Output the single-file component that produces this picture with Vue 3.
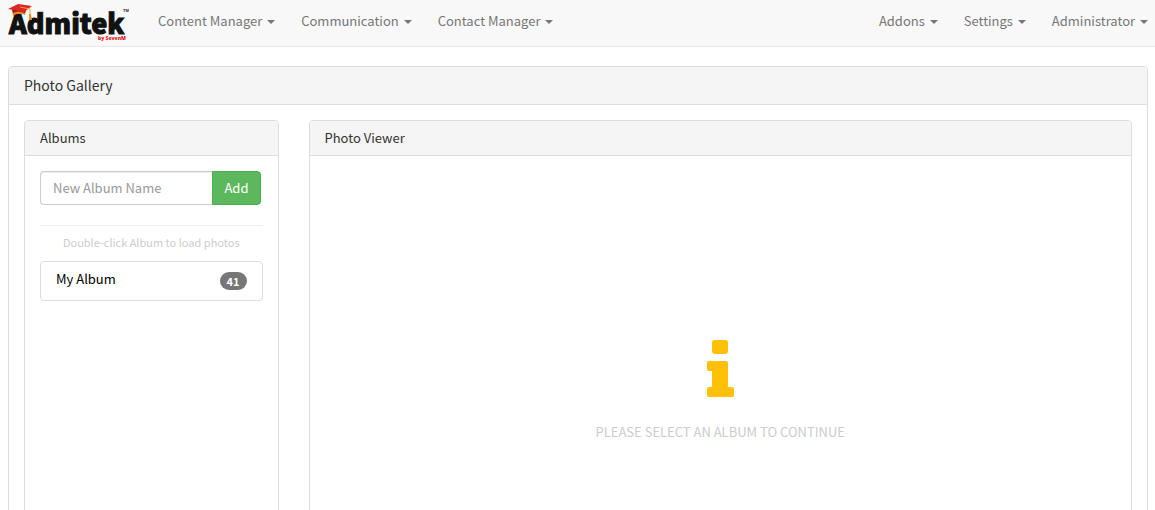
<template>
  <div class="page">
    <nav class="navbar">
      <a href="#" class="brand" aria-label="Admitek">
        <svg width="132" height="46" viewBox="0 0 132 46">
          <text x="9" y="34" class="logo-name">Admitek</text>
          <text x="98" y="40" class="logo-by">by SevenM</text>
          <text x="123" y="12" class="logo-tm">TM</text>
          <path d="M12 10 L13 16 Q18 12 25 15 L26 10 Z" fill="#e8862e" />
          <path d="M12 9 L13 13 Q18 10 25 13 L26 9 Z" fill="#9c1c12" />
          <path d="M8 9 L18 4 L32 6 L24 12 Z" fill="#dc2820" />
          <path d="M20 7 L30 9 L30 15" fill="none" stroke="#f5a03a" stroke-width="1" />
          <path d="M29 14 L31 14 L32 20 L29 20 Z" fill="#f0922c" />
        </svg>
      </a>
      <ul class="nav">
        <li v-for="item in leftMenu" :key="item">
          <a href="#">{{ item }} <b class="caret"></b></a>
        </li>
      </ul>
      <ul class="nav nav-right">
        <li v-for="item in rightMenu" :key="item">
          <a href="#">{{ item }} <b class="caret"></b></a>
        </li>
      </ul>
    </nav>

    <main class="panel gallery">
      <h1 class="panel-heading gallery-heading">Photo Gallery</h1>
      <div class="gallery-body">
        <section class="panel albums">
          <h2 class="panel-heading">Albums</h2>
          <div class="albums-body">
            <form class="input-group" @submit.prevent="addAlbum">
              <input type="text" v-model="albumName" placeholder="New Album Name" aria-label="New Album Name" />
              <button type="submit">Add</button>
            </form>
            <hr />
            <p class="hint">Double-click Album to load photos</p>
            <ul class="list">
              <li v-for="album in albums" :key="album.name">
                <span>{{ album.name }}</span>
                <span class="badge">{{ album.count }}</span>
              </li>
            </ul>
          </div>
        </section>

        <section class="panel viewer">
          <h2 class="panel-heading">Photo Viewer</h2>
          <div class="viewer-body">
            <svg class="info" width="28" height="58" viewBox="-1 0 28 58">
              <rect x="5" y="0" width="16" height="14" rx="3" />
              <path d="M2 21 H19 Q21 21 21 23 V47 H24 Q27 47 27 49 V55 Q27 57 24 57 H2 Q0 57 0 55 V49 Q0 47 2 47 H5 V31 H2 Q0 31 0 29 V23 Q0 21 2 21 Z" />
            </svg>
            <p>PLEASE SELECT AN ALBUM TO CONTINUE</p>
          </div>
        </section>
      </div>
    </main>
  </div>
</template>

<script setup>
import { ref } from 'vue';

const leftMenu = ['Content Manager', 'Communication', 'Contact Manager'];
const rightMenu = ['Addons', 'Settings', 'Administrator'];

const albumName = ref('');
const albums = ref([{ name: 'My Album', count: 41 }]);

const addAlbum = () => {
  const name = albumName.value.trim();
  if (name) {
    albums.value.push({ name, count: 0 });
    albumName.value = '';
  }
};
</script>

<style>
body {
  margin: 0;
  background: #fff;
}
</style>

<style scoped>
.page {
  height: 100vh;
  overflow: hidden;
  font-family: "Source Sans Pro", "Noto Sans CJK SC", sans-serif;
  font-size: 13px;
  line-height: 20px;
  color: #333;
}

.page * {
  box-sizing: border-box;
}

/* top bar */
.navbar {
  display: flex;
  height: 47px;
  padding-right: 7px;
  background: #f8f8f8;
  border-bottom: 1px solid #e7e7e7;
}

.brand {
  margin-right: 26px;
}

.brand svg {
  display: block;
}

.logo-name {
  font-family: "Noto Sans CJK SC", sans-serif;
  font-size: 27px;
  font-weight: 900;
  fill: #111;
  stroke: #111;
  stroke-width: 1px;
}

.logo-by {
  font-family: "Open Sans", sans-serif;
  font-size: 5px;
  font-weight: 800;
  fill: #e02020;
}

.logo-tm {
  font-family: "Liberation Sans", sans-serif;
  font-size: 4px;
  font-weight: 700;
  fill: #222;
}

.nav {
  display: flex;
  gap: 26px;
  margin: 0;
  padding: 11px 0 0;
  list-style: none;
}

.nav-right {
  margin-left: auto;
}

.nav a {
  color: #777;
  text-decoration: none;
}

.caret {
  display: inline-block;
  margin-left: 2px;
  vertical-align: middle;
  border-top: 4px solid;
  border-right: 4px solid transparent;
  border-left: 4px solid transparent;
}

/* panels */
.panel {
  border: 1px solid #ddd;
  border-radius: 4px;
  background: #fff;
}

.panel-heading {
  margin: 0;
  padding: 7px 15px;
  border-bottom: 1px solid #ddd;
  border-radius: 3px 3px 0 0;
  background: #f5f5f5;
  font-size: 13px;
  font-weight: 400;
  line-height: 20px;
}

.gallery {
  margin: 19px 7px 0 8px;
}

.gallery-heading {
  padding: 8px 15px 9px;
  font-size: 14px;
}

.gallery-body {
  display: grid;
  grid-template-columns: repeat(12, 1fr);
  gap: 30px;
  padding: 15px;
}

.albums {
  grid-column: span 3;
}

.viewer {
  grid-column: span 9;
}

.albums-body {
  padding: 15px;
}

.input-group {
  display: flex;
  margin-right: 2px;
}

.input-group input {
  flex: 1;
  min-width: 0;
  height: 34px;
  padding: 5px 12px 7px;
  border: 1px solid #ccc;
  border-right: 0;
  border-radius: 4px 0 0 4px;
  box-shadow: inset 0 1px 1px rgba(0, 0, 0, 0.075);
  font: inherit;
}

.input-group input::placeholder {
  color: #999;
}

.input-group button {
  height: 34px;
  padding: 6px 11px;
  border: 1px solid #4cae4c;
  border-radius: 0 4px 4px 0;
  background: #5cb85c;
  color: #fff;
  font: inherit;
}

hr {
  margin: 20px 0 6px;
  border: 0;
  border-top: 1px solid #eee;
}

.hint {
  margin: 0 0 9px;
  font-size: 11px;
  text-align: center;
  color: #ccc;
}

.list {
  margin: 0;
  padding: 0;
  list-style: none;
}

.list li {
  display: flex;
  justify-content: space-between;
  align-items: flex-start;
  padding: 7px 15px 10px;
  border: 1px solid #ddd;
  border-radius: 4px;
  color: #000;
}

.badge {
  margin-top: 3px;
  padding: 0 7px;
  border-radius: 10px;
  background: #777;
  color: #fff;
  font-size: 11px;
  font-weight: 700;
  line-height: 18px;
}

.viewer-body {
  display: flex;
  flex-direction: column;
  align-items: center;
  justify-content: center;
  gap: 24px;
  min-height: 470px;
}

.viewer-body p {
  margin: 0;
  color: #ccc;
}

.info {
  fill: #ffc107;
}
</style>
